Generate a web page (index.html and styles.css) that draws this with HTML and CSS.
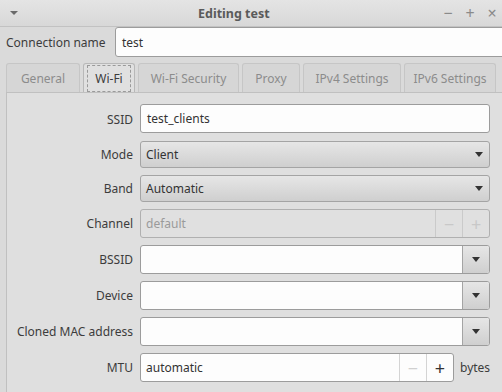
FILE: index.html
```html
<!DOCTYPE html>
<html lang="en">
<head>
    <meta charset="UTF-8">
    <title>Editing test</title>
    <link rel="stylesheet" href="styles.css">
</head>
<body>
    <div class="window">
        <div class="titlebar">
            <span class="menu-arrow"></span>
            <span class="title">Editing test</span>
            <div class="wm-buttons">
                <span>&minus;</span>
                <span>+</span>
                <span>&times;</span>
            </div>
        </div>

        <div class="name-row">
            <label>Connection name</label>
            <div class="entry name-entry">test</div>
        </div>

        <div class="tabs">
            <div class="tab tab-general">General</div>
            <div class="tab active tab-wifi"><span class="focus">Wi-Fi</span></div>
            <div class="tab tab-security">Wi-Fi Security</div>
            <div class="tab tab-proxy">Proxy</div>
            <div class="tab tab-ipv4">IPv4 Settings</div>
            <div class="tab tab-ipv6">IPv6 Settings</div>
        </div>

        <div class="panel">
            <div class="form">
                <label>SSID</label>
                <div class="entry">test_clients</div>

                <label>Mode</label>
                <div class="combo">Client<span class="arrow"></span></div>

                <label>Band</label>
                <div class="combo">Automatic<span class="arrow"></span></div>

                <label>Channel</label>
                <div class="spin disabled">
                    <span class="spin-text">default</span>
                    <span class="spin-btn off">&minus;</span>
                    <span class="spin-btn off">+</span>
                </div>

                <label>BSSID</label>
                <div class="combo-entry">
                    <span class="spin-text"></span>
                    <span class="combo-btn"><span class="arrow"></span></span>
                </div>

                <label>Device</label>
                <div class="combo-entry">
                    <span class="spin-text"></span>
                    <span class="combo-btn"><span class="arrow"></span></span>
                </div>

                <label>Cloned MAC address</label>
                <div class="combo-entry">
                    <span class="spin-text"></span>
                    <span class="combo-btn"><span class="arrow"></span></span>
                </div>

                <label>MTU</label>
                <div class="mtu-row">
                    <div class="spin">
                        <span class="spin-text">automatic</span>
                        <span class="spin-btn off">&minus;</span>
                        <span class="spin-btn">+</span>
                    </div>
                    <span class="unit">bytes</span>
                </div>
            </div>
        </div>
    </div>
</body>
</html>
```

FILE: styles.css
```css
body {
    margin: 0;
    background: #dadada;
    font-family: 'Noto Sans', sans-serif;
    font-size: 12px;
    color: #3c3c3c;
}
.window {
    width: 502px;
    height: 392px;
    overflow: hidden;
}
.titlebar {
    height: 26px;
    display: flex;
    align-items: center;
    background: linear-gradient(#e4e4e4, #d8d8d8);
    border-bottom: 1px solid #c2c2c2;
}
.menu-arrow {
    width: 0;
    height: 0;
    margin-left: 10px;
    border-left: 4px solid transparent;
    border-right: 4px solid transparent;
    border-top: 4px solid #6a6a6a;
}
.title {
    margin-left: 180px;
    font-weight: bold;
    font-size: 12.5px;
    color: #5a5a5a;
}
.wm-buttons {
    margin-left: auto;
    display: flex;
    gap: 8px;
    margin-right: 3px;
    color: #8a8a8a;
    font-size: 16px;
}
.wm-buttons span {
    width: 14px;
    text-align: center;
}
.name-row {
    display: flex;
    align-items: center;
    padding: 0 0 0 6px;
    height: 30px;
}
.name-row label {
    width: 109px;
}
.entry {
    height: 27px;
    box-sizing: border-box;
    background: #fdfdfd;
    border: 1px solid #9c9c9c;
    border-radius: 3px;
    padding: 0 6px;
    display: flex;
    align-items: center;
    color: #333;
}
.name-entry {
    flex: 1;
    height: 30px;
    margin-right: -4px;
}
.tabs {
    display: flex;
    gap: 3px;
    margin: 6px 0 0 6px;
    height: 29px;
}
.tab {
    box-sizing: border-box;
    height: 29px;
    border: 1px solid #c6c6c6;
    border-bottom: none;
    border-radius: 3px 3px 0 0;
    background: #d6d6d6;
    color: #8c8c8c;
    display: flex;
    align-items: center;
    justify-content: center;
}
.tab.active {
    background: #e0e0e0;
    color: #3c3c3c;
    border-color: #b8b8b8;
}
.focus {
    border: 1px dashed #9a9a9a;
    padding: 4px 7px;
    margin-top: 1px;
}
.tab-general { width: 74px; }
.tab-wifi { width: 52px; }
.tab-security { width: 101px; }
.tab-proxy { width: 58px; }
.tab-ipv4 { width: 98px; }
.tab-ipv6 { width: 92px; }
.panel {
    margin-left: 6px;
    border-left: 1px solid #c0c0c0;
    border-top: 1px solid #c0c0c0;
    background: #dfdfdf;
    height: 310px;
    padding: 11px 13px 0 0;
}
.form {
    display: grid;
    grid-template-columns: 126px 1fr;
    column-gap: 7px;
    row-gap: 7px;
    align-items: center;
}
.form label {
    text-align: right;
}
.form > .entry {
    height: 29px;
    margin-bottom: 1px;
}
.combo {
    height: 27px;
    box-sizing: border-box;
    border: 1px solid #a4a4a4;
    border-radius: 3px;
    background: linear-gradient(#e6e6e6, #cfcfcf);
    display: flex;
    align-items: center;
    padding: 0 0 0 5px;
    color: #333;
}
.arrow {
    width: 0;
    height: 0;
    margin-left: auto;
    margin-right: 6px;
    border-left: 4px solid transparent;
    border-right: 4px solid transparent;
    border-top: 5px solid #333;
}
.combo-entry, .spin {
    height: 29px;
    box-sizing: border-box;
    border: 1px solid #9c9c9c;
    border-radius: 3px;
    background: #fdfdfd;
    display: flex;
    overflow: hidden;
}
.spin-text {
    flex: 1;
    display: flex;
    align-items: center;
    padding: 0 5px;
    color: #333;
}
.combo-btn {
    width: 26px;
    border-left: 1px solid #a4a4a4;
    background: linear-gradient(#e6e6e6, #cfcfcf);
    display: flex;
    align-items: center;
}
.combo-btn .arrow {
    margin-right: 9px;
    margin-left: 9px;
}
.spin-btn {
    width: 26px;
    border-left: 1px solid #d4d4d4;
    display: flex;
    align-items: center;
    justify-content: center;
    font-size: 18px;
    color: #333;
}
.spin-btn.off {
    color: #d0d0d0;
}
.spin.disabled {
    background: #e0e0e0;
    border-color: #b0b0b0;
}
.spin.disabled .spin-text {
    color: #9a9a9a;
}
.spin.disabled .spin-btn {
    border-left-color: #cacaca;
    color: #c8c8c8;
}
.mtu-row {
    display: flex;
    align-items: center;
    gap: 6px;
}
.mtu-row .spin {
    width: 314px;
}
.unit {
    color: #3c3c3c;
}
```
